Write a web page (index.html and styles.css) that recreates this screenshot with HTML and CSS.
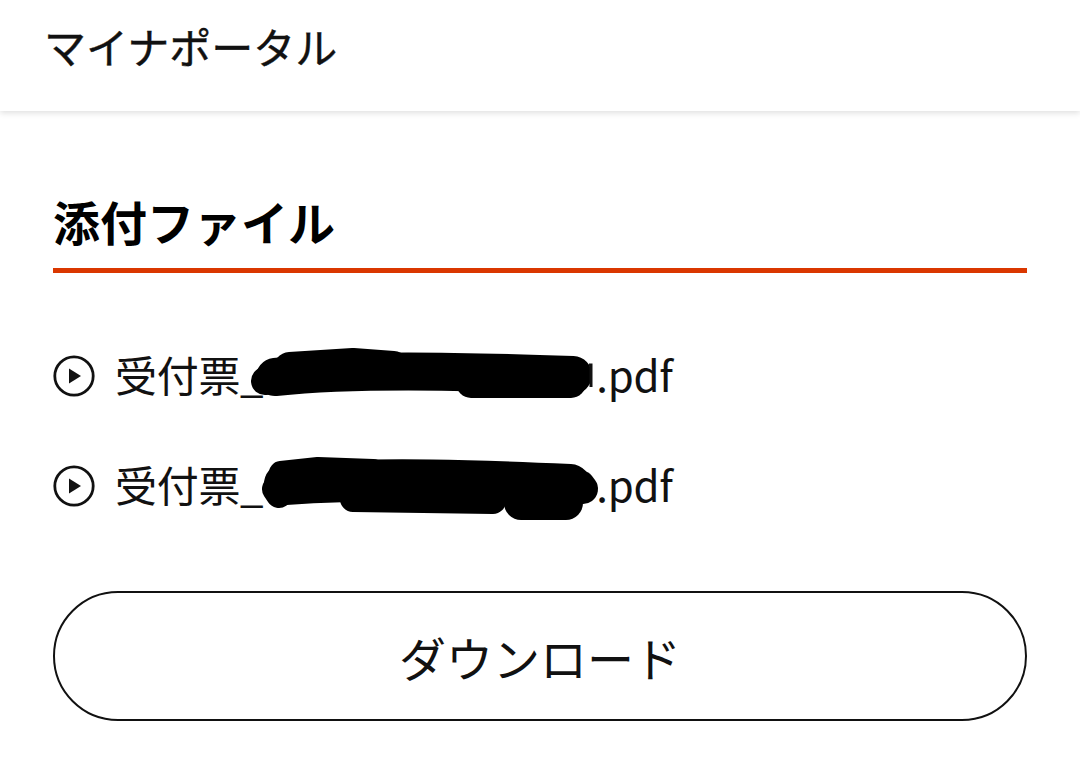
FILE: index.html
```html
<!DOCTYPE html>
<html lang="ja">
<head>
	<meta charset="UTF-8">
	<title>マイナポータル</title>
	<link rel="stylesheet" href="styles.css">
</head>
<body>
	<header class="top-bar">
		<div class="top-title">マイナポータル</div>
	</header>

	<main class="content">
		<h2 class="section-title">添付ファイル</h2>

		<ul class="file-list">
			<li class="file-row">
				<svg class="play-icon" viewBox="0 0 42 42" width="42" height="42">
					<circle cx="21" cy="21" r="19.2" fill="none" stroke="#111" stroke-width="2.8"/>
					<path d="M16 13.5 L28 21 L16 28.5 Z" fill="#111"/>
				</svg>
				<span class="file-name">受付票_<span class="masked"></span>.pdf</span>
				<!-- redaction over the file name -->
				<svg class="redact" viewBox="0 0 1080 50" width="1080" height="50">
					<g fill="none" stroke="#000" stroke-linecap="round" stroke-linejoin="round">
						<path d="M222 28 C300 20 400 22 520 26" stroke-width="38"/>
						<path d="M237 20 L300 16 L340 19" stroke-width="34"/>
						<path d="M418 34 L518 34" stroke-width="30"/>
						<path d="M212 32 L230 30" stroke-width="28"/>
					</g>
					<path d="M536 16 L538 16 L538 38" fill="none" stroke="#111" stroke-width="3"/>
				</svg>
			</li>
			<li class="file-row">
				<svg class="play-icon" viewBox="0 0 42 42" width="42" height="42">
					<circle cx="21" cy="21" r="19.2" fill="none" stroke="#111" stroke-width="2.8"/>
					<path d="M16 13.5 L28 21 L16 28.5 Z" fill="#111"/>
				</svg>
				<span class="file-name">受付票_<span class="masked"></span>.pdf</span>
				<svg class="redact" viewBox="0 0 1080 50" width="1080" height="50">
					<g fill="none" stroke="#000" stroke-linecap="round" stroke-linejoin="round">
						<path d="M232 25 C330 18 430 22 517 26" stroke-width="42"/>
						<path d="M228 14 L265 10 L320 12" stroke-width="24"/>
						<path d="M468 44 L513 44" stroke-width="34"/>
						<path d="M222 30 L226 36" stroke-width="26"/>
						<path d="M527 26 L530 30" stroke-width="30"/>
						<path d="M300 40 L440 42" stroke-width="26"/>
					</g>
				</svg>
			</li>
		</ul>

		<button class="download-btn">ダウンロード</button>
	</main>
</body>
</html>
```

FILE: styles.css
```css
* {
	box-sizing: border-box;
}

body {
	margin: 0;
	background: #fff;
	font-family: "Noto Sans CJK JP", "Noto Sans", sans-serif;
	color: #111;
}

.top-bar {
	height: 111px;
	padding: 20px 0 0 44px;
	background: #fff;
	box-shadow: 0 2px 6px rgba(0, 0, 0, 0.13);
}

.top-title {
	font-size: 42px;
	line-height: 52px;
	font-weight: 400;
	color: #111;
	-webkit-text-stroke: 0.4px #111;
}

.content {
	padding: 0 53px;
}

.section-title {
	margin: 80px 0 0;
	padding-bottom: 17px;
	font-size: 47px;
	line-height: 60px;
	font-weight: 700;
	color: #000;
	border-bottom: 5px solid #da3700;
}

.file-list {
	list-style: none;
	margin: 76px 0 0;
	padding: 0;
	display: flex;
	flex-direction: column;
	gap: 60px;
}

.file-row {
	position: relative;
	display: flex;
	align-items: center;
	gap: 20px;
	height: 50px;
}

.play-icon {
	flex: none;
	margin-top: 4px;
}

.file-name {
	font-size: 42px;
	line-height: 50px;
	white-space: nowrap;
	letter-spacing: -0.3px;
}

.masked {
	display: inline-block;
	width: 333px;
}

.redact {
	position: absolute;
	left: 0;
	top: 0;
	overflow: visible;
	pointer-events: none;
}

.download-btn {
	display: block;
	width: 100%;
	height: 130px;
	margin-top: 82px;
	border: 2px solid #111;
	border-radius: 65px;
	background: #fff;
	font-family: inherit;
	font-size: 47px;
	color: #111;
}
```
